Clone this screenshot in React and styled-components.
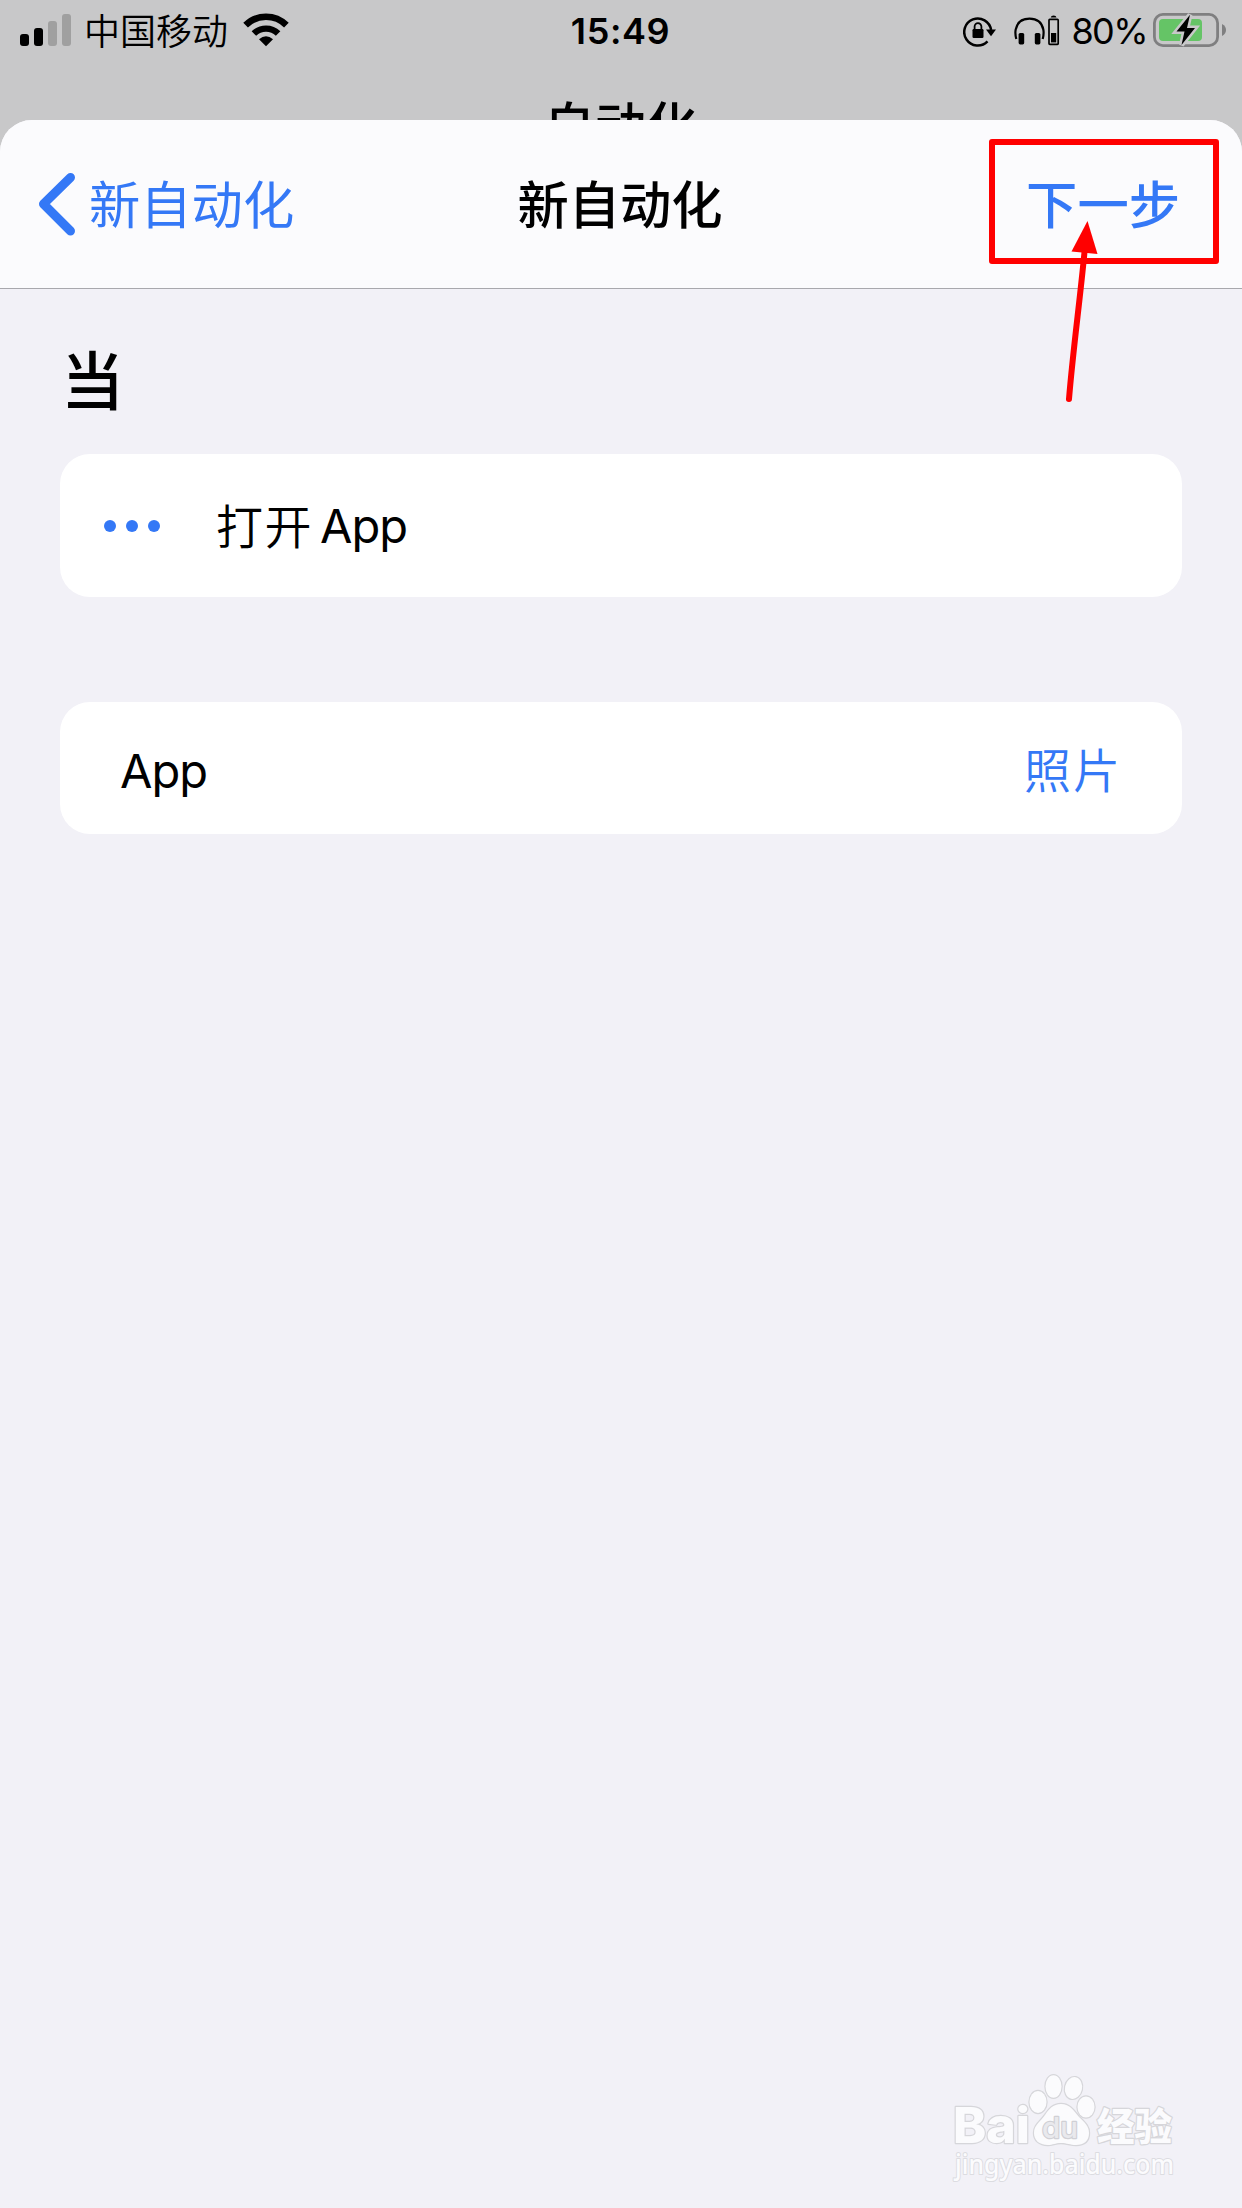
import React from "react";
import styled, { createGlobalStyle } from "styled-components";

const BLUE = "#3478f6";

const GlobalStyle = createGlobalStyle`
  * { box-sizing: border-box; }
  body { margin: 0; background: #c8c8c9; }
`;

const Screen = styled.div`
  position: relative;
  width: 1242px;
  height: 2208px;
  overflow: hidden;
  display: flex;
  flex-direction: column;
  background: #c8c8c9;
  color: #000;
  font-family: Inter, "Noto Sans CJK SC", sans-serif;
`;

const StatusBar = styled.header`
  flex: none;
  height: 62px;
  padding: 0 16px 0 20px;
  display: grid;
  grid-template-columns: 1fr auto 1fr;
  align-items: center;
`;

const StatusGroup = styled.div`
  display: flex;
  align-items: center;
  height: 62px;
  justify-content: ${(p) => (p.$end ? "flex-end" : "flex-start")};
`;

const Carrier = styled.span`
  margin: 0 15px 0 13px;
  padding-bottom: 3px;
  font-size: 36px;
  line-height: 59px;
  font-weight: 350;
  font-family: "Noto Sans CJK SC", sans-serif;
`;

const Time = styled.time`
  padding-right: 5px;
  font-size: 36px;
  line-height: 62px;
  font-weight: 600;
  letter-spacing: 0.6px;
`;

const Percent = styled.span`
  margin: 0 6px 0 11px;
  font-size: 36px;
  line-height: 62px;
  letter-spacing: -1.6px;
`;

const Icon = styled.svg`
  flex: none;
  display: block;
  margin-right: ${(p) => p.$gap || 0}px;
`;

const Behind = styled.div`
  flex: none;
  height: 58px;
  padding: 24px 1px 0 0;
  overflow: hidden;
  text-align: center;
  font-size: 51px;
  line-height: 74px;
  font-weight: 500;
  font-family: "Noto Sans CJK SC", sans-serif;
`;

const Sheet = styled.main`
  flex: 1;
  overflow: hidden;
  border-radius: 32px 32px 0 0;
  background: #f2f1f7;
`;

const NavBar = styled.nav`
  height: 169px;
  display: grid;
  grid-template-columns: 1fr auto 1fr;
  align-items: center;
  background: #fbfbfd;
  border-bottom: 1px solid #a8a8ad;
  font-family: "Noto Sans CJK SC", sans-serif;
  font-size: 51.3px;
  line-height: 74px;
`;

const NavButton = styled.button`
  display: flex;
  align-items: center;
  justify-self: ${(p) => (p.$end ? "end" : "start")};
  gap: 13px;
  padding: 0;
  margin: ${(p) => (p.$end ? "0 62px 0 0" : "0 0 0 38px")};
  border: 0;
  background: none;
  color: ${BLUE};
  font: inherit;
  font-weight: ${(p) => (p.$strong ? 500 : 400)};
`;

const NavLabel = styled.span`
  padding-bottom: 5px;
`;

const NavTitle = styled.h1`
  margin: 0;
  padding: 0 2px 5px 0;
  font: inherit;
  font-weight: 500;
`;

const Content = styled.div`
  padding: 40px 60px 0;
  display: flex;
  flex-direction: column;
`;

const Heading = styled.h2`
  margin: 0 0 29px 1px;
  font-family: "Noto Sans CJK SC", sans-serif;
  font-size: 63px;
  line-height: 96px;
  font-weight: 500;
`;

const Card = styled.section`
  display: flex;
  align-items: center;
  height: ${(p) => p.$height}px;
  margin-bottom: 105px;
  padding: 0 60px 0 ${(p) => p.$left}px;
  border-radius: 30px;
  background: #fff;
  font-size: 47px;
  line-height: 60px;
`;

const Dots = styled.div`
  display: flex;
  gap: 10px;
  margin-right: 56px;
`;

const Dot = styled.i`
  width: 12px;
  height: 12px;
  border-radius: 50%;
  background: ${BLUE};
`;

const Chinese = styled.span`
  padding-bottom: 4px;
  font-family: "Noto Sans CJK SC", sans-serif;
  letter-spacing: 1.5px;
  margin-right: 7px;
  font-weight: 350;
`;

const Latin = styled.span`
  padding-top: ${(p) => p.$drop || 0}px;
  letter-spacing: -1px;
`;

const Value = styled.span`
  margin-left: auto;
  padding-bottom: 1px;
  color: ${BLUE};
  font-family: "Noto Sans CJK SC", sans-serif;
  letter-spacing: 2px;
  font-weight: 350;
`;

const Annotation = styled.svg`
  position: absolute;
  left: 980px;
  top: 130px;
  pointer-events: none;
`;

const Watermark = styled.svg`
  position: absolute;
  left: 940px;
  top: 2060px;
  overflow: visible;
  paint-order: stroke;
`;

function Signal() {
  return (
    <Icon width="51" height="34" viewBox="0 0 51 34">
      <rect x="0" y="20" width="9" height="12" rx="3" />
      <rect x="14" y="14" width="9" height="18" rx="3" />
      <rect x="28" y="7" width="9" height="25" rx="3" fill="#a0a0a0" />
      <rect x="42" y="0" width="9" height="32" rx="3" fill="#a0a0a0" />
    </Icon>
  );
}

function Wifi() {
  return (
    <Icon width="46" height="36" viewBox="0 0 46 36">
      <g fill="none" stroke="#000">
        <path d="M2.6 12.2 A29 29 0 0 1 43.4 12.2" strokeWidth="6.6" />
        <path d="M10.9 20.6 A17.2 17.2 0 0 1 35.1 20.6" strokeWidth="6.4" />
      </g>
      <path d="M16 26.2 Q23 20.4 30 26.2 L23 33.2 Z" />
    </Icon>
  );
}

function RotationLock() {
  return (
    <Icon width="33" height="32" viewBox="0 0 33 32" $gap={18}>
      <path d="M24.5 26.3 A13.5 13.5 0 1 1 28.1 15" fill="none" stroke="#000" strokeWidth="2.5" />
      <path d="M23 14.4 H33 L28 21.2 Z" />
      <rect x="9.5" y="14" width="11" height="9" rx="1.2" />
      <path d="M11.6 15 V11.5 a3.4 3.4 0 0 1 6.8 0 V15" fill="none" stroke="#000" strokeWidth="1.8" />
    </Icon>
  );
}

function Headphones() {
  return (
    <Icon width="46" height="32" viewBox="0 0 46 32">
      <path d="M2.3 24 C1.2 20 1.2 17 1.7 14.5 C3.2 7 8.5 3.6 15.5 3.6 S27.8 7 29.3 14.5 C29.8 17 29.8 20 28.7 24" fill="none" stroke="#000" strokeWidth="2.2" />
      <rect x="4.6" y="18" width="5.6" height="11.4" rx="1.6" />
      <rect x="20.8" y="18" width="5.6" height="11.4" rx="1.6" />
      <rect x="35" y="4.4" width="9.2" height="25" rx="0.8" fill="none" stroke="#000" strokeWidth="1.7" />
      <path d="M36.7 2.5 Q37 0.5 39.6 0.5 T42.5 2.5 Z" />
      <rect x="37" y="18" width="5.2" height="9.4" />
    </Icon>
  );
}

function Battery() {
  return (
    <Icon width="73" height="40" viewBox="0 0 73 40">
      <rect x="1.4" y="3.4" width="63.2" height="31.2" rx="8.5" fill="none" stroke="#7f7f80" strokeWidth="2.8" />
      <rect x="6" y="8" width="43" height="22" rx="4" fill="#65c466" />
      <path d="M69 13 C72 14.5 73 17 73 19 S72 23.5 69 25 Z" fill="#7f7f80" />
      <path d="M37 3.7 L23.5 20.5 H31.5 L28.5 34 L42 17 H34 Z" fill="#000" stroke="#c8c8c9" strokeWidth="5" paintOrder="stroke" />
    </Icon>
  );
}

function BackChevron() {
  return (
    <Icon width="38" height="64" viewBox="0 0 38 64">
      <path d="M32.5 5.5 L5.5 32 L32.5 59" fill="none" stroke={BLUE} strokeWidth="9" strokeLinecap="round" strokeLinejoin="round" />
    </Icon>
  );
}

export default function App() {
  return (
    <Screen>
      <GlobalStyle />
      <StatusBar>
        <StatusGroup>
          <Signal />
          <Carrier>中国移动</Carrier>
          <Wifi />
        </StatusGroup>
        <Time>15:49</Time>
        <StatusGroup $end>
          <RotationLock />
          <Headphones />
          <Percent>80%</Percent>
          <Battery />
        </StatusGroup>
      </StatusBar>
      <Behind>自动化</Behind>
      <Sheet>
        <NavBar>
          <NavButton>
            <BackChevron />
            <NavLabel>新自动化</NavLabel>
          </NavButton>
          <NavTitle>新自动化</NavTitle>
          <NavButton $end $strong>
            <NavLabel>下一步</NavLabel>
          </NavButton>
        </NavBar>
        <Content>
          <Heading>当</Heading>
          <Card $height={143} $left={44}>
            <Dots>
              <Dot />
              <Dot />
              <Dot />
            </Dots>
            <Chinese>打开</Chinese>
            <Latin $drop={1}>App</Latin>
          </Card>
          <Card $height={132} $left={60}>
            <Latin $drop={5}>App</Latin>
            <Value>照片</Value>
          </Card>
        </Content>
      </Sheet>
      <Annotation width="250" height="280" viewBox="980 130 250 280">
        <rect x="992" y="142" width="224" height="119" fill="none" stroke="#f00" strokeWidth="6" strokeLinejoin="round" />
        <path d="M1069 399 C1073 350 1080 300 1084.5 252" fill="none" stroke="#f00" strokeWidth="6" strokeLinecap="round" />
        <path d="M1087.5 221 L1071.5 251.5 L1097.5 254 Z" fill="#f00" />
      </Annotation>
      <Watermark width="250" height="140" viewBox="940 2060 250 140">
        <g fill="#fbfbfd" stroke="#d6d6da" strokeWidth="2.4" strokeLinejoin="round">
          <text x="953" y="2143" fontFamily="Inter, sans-serif" fontWeight="800" fontSize="49" textLength="77" lengthAdjust="spacingAndGlyphs">Bai</text>
          <ellipse cx="1038" cy="2102" rx="8.5" ry="11" />
          <ellipse cx="1053.5" cy="2086.5" rx="8" ry="11.3" />
          <ellipse cx="1073.5" cy="2088" rx="8.5" ry="11" transform="rotate(12 1073.5 2088)" />
          <ellipse cx="1086" cy="2107" rx="8.5" ry="10.5" />
          <path d="M1061 2104 C1070 2104 1074 2111 1079 2117 C1085 2123 1089 2126 1089 2133 C1089 2141 1084 2145 1076 2145 C1070 2145 1067 2143 1061 2143 S1053 2145 1048 2145 C1039 2145 1034 2140 1034 2133 C1034 2125 1040 2122 1045 2115 C1049 2109 1053 2104 1061 2104 Z" />
          <text x="1097" y="2140" fontFamily="'Noto Sans CJK SC', sans-serif" fontWeight="900" fontSize="38" textLength="75" lengthAdjust="spacingAndGlyphs">经验</text>
          <text x="1042" y="2138" fontFamily="Inter, sans-serif" fontWeight="500" fontSize="29" fill="#e9e9ed" stroke="#d0d0d5" textLength="36" lengthAdjust="spacingAndGlyphs">du</text>
          <text x="955" y="2174" fontFamily="'Noto Sans', sans-serif" fontWeight="500" fontSize="27" stroke="#dcdce1" strokeWidth="2" textLength="219" lengthAdjust="spacingAndGlyphs">jingyan.baidu.com</text>
        </g>
      </Watermark>
    </Screen>
  );
}
